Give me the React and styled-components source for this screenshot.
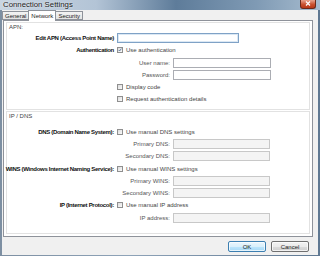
import React from "react";
import styled, { createGlobalStyle } from "styled-components";

const Global = createGlobalStyle`
  html, body { margin: 0; padding: 0; background: #5d6f80; }
  body { width: 320px; height: 256px; overflow: hidden; }
  * { box-sizing: border-box; }
`;

const Win = styled.div`
  width: 320px;
  height: 256px;
  display: flex;
  flex-direction: column;
  background: linear-gradient(90deg, #7d8fa2 0%, #8ea3b8 40%, #5f7892 100%);
  font-family: "Liberation Sans", Arial, sans-serif;
  font-size: 6px;
  color: #333;
`;

const TitleBar = styled.div`
  height: 10px;
  display: flex;
  align-items: center;
  justify-content: space-between;
  padding: 0 4px 1px 3px;
  background: linear-gradient(90deg, #c9d5e2 0%, #b3c4d6 30%, #5e7c9a 55%, #7f9ab4 80%, #a7bccf 100%);
`;

const Title = styled.span`
  font-family: "Liberation Sans", Arial, sans-serif;
  font-size: 7.8px;
  color: #1a1a1a;
  text-shadow: 0 0 2px #fff;
`;

const CloseBtn = styled.div`
  width: 16px;
  height: 9px;
  margin-top: -1px;
  border-radius: 0 0 3px 3px;
  background: linear-gradient(180deg, #e9a48f 0%, #c9502e 55%, #b83818 100%);
  border: 1px solid #6b2a1a;
  border-top: none;
  display: flex;
  align-items: center;
  justify-content: center;
`;

const Body = styled.div`
  flex: 1;
  margin: 0 2px 2px 2px;
  background: #f0f0f0;
  display: flex;
  flex-direction: column;
`;

const Tabs = styled.div`
  height: 10px;
  display: flex;
  align-items: flex-end;
  position: relative;
  z-index: 1;
`;

const Tab = styled.div`
  height: ${(p) => (p.$active ? "11px" : "9px")};
  margin-bottom: ${(p) => (p.$active ? "-1px" : "0")};
  padding: 0 2px;
  display: flex;
  align-items: center;
  justify-content: center;
  border: 1px solid #8e929a;
  border-bottom: ${(p) => (p.$active ? "none" : "1px solid #8e929a")};
  margin-left: ${(p) => (p.$first ? "0" : "-1px")};
  background: ${(p) => (p.$active ? "#fff" : "linear-gradient(180deg,#f3f3f3,#e3e3e3)")};
  color: #222;
  font-size: 6px;
  white-space: nowrap;
  min-width: ${(p) => p.$w}px;
`;

const Panel = styled.div`
  flex: 1;
  margin: 0 5px 0 1px;
  background: #fff;
  border: 1px solid #8e929a;
  padding: 1px 2px 2px 2px;
  display: flex;
  flex-direction: column;
  gap: 1px;
`;

const Group = styled.div`
  border: 1px solid #e2e2e2;
  height: ${(p) => p.$h}px;
  display: flex;
  flex-direction: column;
  padding: 0 0 0 2px;
`;

const GroupTitle = styled.div`
  height: ${(p) => p.$h || 9}px;
  line-height: 6px;
  padding-top: 1px;
  color: #444;
`;

const Row = styled.div`
  display: flex;
  align-items: center;
  height: ${(p) => p.$h || 12}px;
`;

const BoldLabel = styled.div`
  width: 108px;
  flex-shrink: 0;
  display: flex;
  justify-content: flex-end;
  font-weight: bold;
  color: #111;
  padding-right: 3px;
  white-space: nowrap;
  letter-spacing: -0.3px;
`;

const SubLabel = styled.div`
  width: 164px;
  flex-shrink: 0;
  text-align: right;
  color: #555;
  padding-right: 3px;
  white-space: nowrap;
`;

const Spacer = styled.div`
  width: 108px;
  flex-shrink: 0;
`;

const Input = styled.div`
  width: ${(p) => p.$w}px;
  height: 10px;
  border: 1px solid ${(p) => (p.$focus ? "#7fa2c6" : p.$disabled ? "#c8c8c8" : "#abadb3")};
  background: ${(p) => (p.$disabled ? "#f4f4f4" : "#fff")};
  box-shadow: ${(p) => (p.$focus ? "inset 0 0 0 1px #dbe8f4" : "none")};
`;

const Check = styled.span`
  width: 6px;
  height: 6px;
  border: 1px solid #8f8f8f;
  background: linear-gradient(135deg, #dcdcdc, #fafafa);
  display: inline-flex;
  align-items: center;
  justify-content: center;
  margin-right: 3px;
  flex-shrink: 0;
`;

const CheckText = styled.span`
  color: #444;
  white-space: nowrap;
`;

const Footer = styled.div`
  height: 18px;
  display: flex;
  justify-content: flex-end;
  align-items: flex-start;
  padding-top: 4px;
  gap: 5px;
  padding-right: 9px;
`;

const Button = styled.div`
  width: 38px;
  height: 11px;
  border: 1px solid ${(p) => (p.$default ? "#3c7fb1" : "#707070")};
  border-radius: 2px;
  background: ${(p) =>
    p.$default
      ? "linear-gradient(180deg,#eaf6fd 0%,#d9f0fc 50%,#bee6fd 51%,#a7d9f5 100%)"
      : "linear-gradient(180deg,#f2f2f2 0%,#ebebeb 50%,#dddddd 51%,#cfcfcf 100%)"};
  box-shadow: inset 0 0 0 1px rgba(255, 255, 255, 0.7);
  display: flex;
  align-items: center;
  justify-content: center;
  color: #222;
  font-size: 6px;
`;

const CheckBox = ({ checked, children }) => (
  <>
    <Check>
      {checked && (
        <svg width="6" height="6" viewBox="0 0 6 6">
          <path d="M1 3 L2.4 4.5 L5 1" fill="none" stroke="#3a5a8a" strokeWidth="1.1" />
        </svg>
      )}
    </Check>
    <CheckText>{children}</CheckText>
  </>
);

export default function App() {
  return (
    <>
      <Global />
      <Win>
        <TitleBar>
          <Title>Connection Settings</Title>
          <CloseBtn>
            <svg width="6" height="5" viewBox="0 0 6 5">
              <path d="M1 0.5 L5 4.5 M5 0.5 L1 4.5" stroke="#fff" strokeWidth="1.2" />
            </svg>
          </CloseBtn>
        </TitleBar>
        <Body>
          <Tabs>
            <Tab $first $w={26}>General</Tab>
            <Tab $active $w={28}>Network</Tab>
            <Tab $w={27}>Security</Tab>
          </Tabs>
          <Panel>
            <Group $h={88}>
              <GroupTitle $h={9}>APN:</GroupTitle>
              <Row $h={12}>
                <BoldLabel>Edit APN (Access Point Name)</BoldLabel>
                <Input $w={122} $focus />
              </Row>
              <Row $h={12}>
                <BoldLabel>Authentication</BoldLabel>
                <CheckBox checked>Use authentication</CheckBox>
              </Row>
              <Row $h={13}>
                <SubLabel>User name:</SubLabel>
                <Input $w={98} />
              </Row>
              <Row $h={12}>
                <SubLabel>Password:</SubLabel>
                <Input $w={98} />
              </Row>
              <Row $h={12}>
                <Spacer />
                <CheckBox>Display code</CheckBox>
              </Row>
              <Row $h={11}>
                <Spacer />
                <CheckBox>Request authentication details</CheckBox>
              </Row>
            </Group>
            <Group $h={123}>
              <GroupTitle $h={14}>IP / DNS</GroupTitle>
              <Row $h={12}>
                <BoldLabel>DNS (Domain Name System):</BoldLabel>
                <CheckBox>Use manual DNS settings</CheckBox>
              </Row>
              <Row $h={12}>
                <SubLabel>Primary DNS:</SubLabel>
                <Input $w={97} $disabled />
              </Row>
              <Row $h={12}>
                <SubLabel>Secondary DNS:</SubLabel>
                <Input $w={97} $disabled />
              </Row>
              <Row $h={13}>
                <BoldLabel>WINS (Windows Internet Naming Service):</BoldLabel>
                <CheckBox>Use manual WINS settings</CheckBox>
              </Row>
              <Row $h={12}>
                <SubLabel>Primary WINS:</SubLabel>
                <Input $w={97} $disabled />
              </Row>
              <Row $h={12}>
                <SubLabel>Secondary WINS:</SubLabel>
                <Input $w={97} $disabled />
              </Row>
              <Row $h={12}>
                <BoldLabel>IP (Internet Protocol):</BoldLabel>
                <CheckBox>Use manual IP address</CheckBox>
              </Row>
              <Row $h={13}>
                <SubLabel>IP address:</SubLabel>
                <Input $w={97} $disabled />
              </Row>
            </Group>
          </Panel>
          <Footer>
            <Button $default>OK</Button>
            <Button>Cancel</Button>
          </Footer>
        </Body>
      </Win>
    </>
  );
}
